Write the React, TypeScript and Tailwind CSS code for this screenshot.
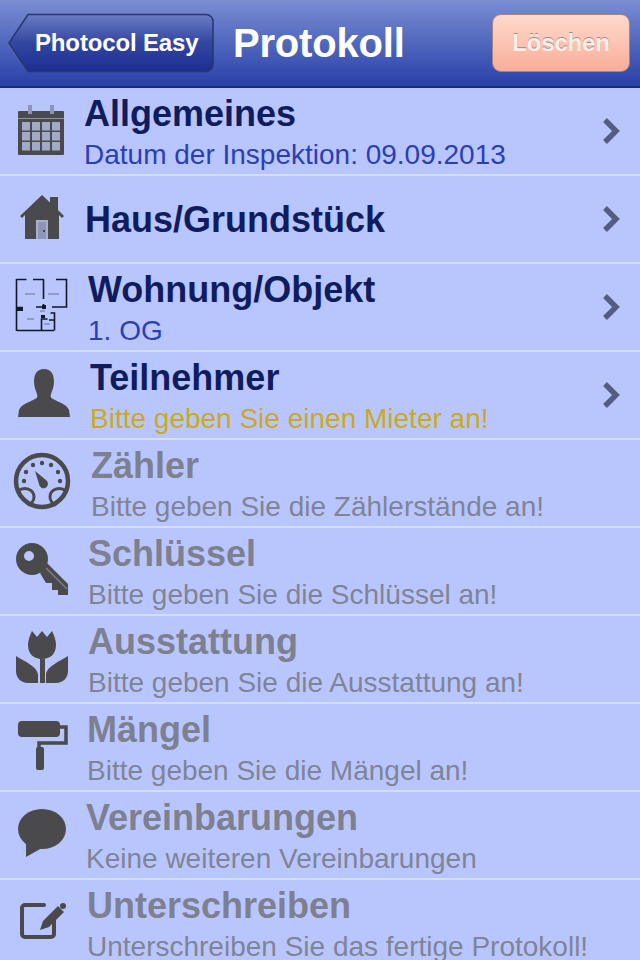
const ink = '#4a4a4c';

const CalendarIcon = () => (
  <svg viewBox="0 0 84 88" className="w-[84px] h-[88px] shrink-0" fill={ink}>
    <rect x="18" y="24" width="46" height="44" rx="1" />
    <rect x="28" y="18" width="4" height="9" fill="#8c95b5" />
    <rect x="50" y="18" width="4" height="9" fill="#8c95b5" />
    <rect x="18" y="31" width="46" height="1" fill="#8c92a8" />
    {[35, 45, 55].map((y) =>
      [22, 32, 42, 52].map((x) => <rect key={`${x}-${y}`} x={x} y={y} width="8" height="8.5" fill="#a2aac8" />),
    )}
  </svg>
);

const HouseIcon = () => (
  <svg viewBox="0 0 85 88" className="w-[85px] h-[88px] shrink-0" fill={ink}>
    <path d="M42 20l8 7.500V22h8v13l6 6-2 2-3-3v24H25V40l-3 3-2-2z" />
    <rect x="36" y="45" width="12" height="19" fill="#a7afcc" />
    <rect x="38" y="47" width="8" height="17" fill="#8d96b8" />
    <rect x="43" y="55" width="2" height="2" fill="#4a4a4c" />
  </svg>
);

const PlanIcon = () => (
  <svg viewBox="0 0 88 88" className="w-[88px] h-[88px] shrink-0" fill="none" stroke="#111827" strokeWidth="1.600">
    <path d="M16.500 16v52M16.500 16.500h10M33 16.500h10.500M56 16.500h10.500v27.500H52M43.500 16v20M43.500 41v3H36M17 44.500h6M17 67.500h37M54.500 67.500V50h-4M41.500 67.500V56h6M54 57h-5" />
    <rect x="17" y="45" width="6" height="3" fill="#111827" stroke="none" />
    <rect x="42" y="42" width="4" height="4" fill="#111827" stroke="none" />
    <rect x="41" y="52" width="4" height="3" fill="#111827" stroke="none" />
    <path d="M25 31h10M48 31h11M27 56h7M44 61h6M40 48h5" stroke="#6b7390" strokeWidth="1" />
  </svg>
);

const PersonIcon = () => (
  <svg viewBox="0 0 90 88" className="w-[90px] h-[88px] shrink-0" fill={ink}>
    <path d="M44 18c7 0 10 5 10 13 0 5-2 9-3 12-1 3 0 4 2 5 5 3 14 5 16 11l1 7H18l1-7c2-6 11-8 16-11 2-1 3-2 2-5-1-3-3-7-3-12 0-8 3-13 10-13z" />
  </svg>
);

const GaugeIcon = () => (
  <svg viewBox="0 0 91 88" className="w-[91px] h-[88px] shrink-0">
    <circle cx="42" cy="42" r="26" fill="none" stroke={ink} strokeWidth="4.500" />
    <path d="M18 52c6-5 16-2 16 6 0 4-3 7-6 8M66 52c-6-5-16-2-16 6 0 4 3 7 6 8" fill="none" stroke={ink} strokeWidth="3" />
    <g fill={ink}>
      <circle cx="42" cy="24" r="2.200" />
      <circle cx="33" cy="26" r="2.200" />
      <circle cx="51" cy="26" r="2.200" />
      <circle cx="26" cy="33" r="2.200" />
      <circle cx="58" cy="33" r="2.200" />
      <circle cx="24" cy="42" r="2.200" />
      <circle cx="60" cy="42" r="2.200" />
      <path d="M35 32l11 9a4.500 4.500 0 1 1-7 4z" />
    </g>
  </svg>
);

const KeyIcon = () => (
  <svg viewBox="0 0 88 88" className="w-[88px] h-[88px] shrink-0" fill={ink}>
    <path fillRule="evenodd" d="M32 16a16 16 0 1 1 0 32 16 16 0 0 1 0-32zm-3 8a5 5 0 1 0 0 10 5 5 0 0 0 0-10z" />
    <path d="M46 35l22 22v11H58v-5h-6v-7h-6l-6-10z" />
    <path d="M46 41l21 21" stroke="#7d7f86" strokeWidth="1.500" />
  </svg>
);

const TulipIcon = () => (
  <svg viewBox="0 0 88 88" className="w-[88px] h-[88px] shrink-0" fill={ink}>
    <path d="M28 30c0-5 2-10 4-14l5 6 5-6 5 6 5-6c2 4 4 9 4 14 0 9-6 14-14 14s-14-5-14-14z" />
    <rect x="40" y="44" width="5" height="24" />
    <path d="M16 41c8 5 22 11 22 19v8H28c-7 0-12-5-12-12z" />
    <path d="M68 41c-8 5-22 11-22 19v8h10c7 0 12-5 12-12z" />
  </svg>
);

const RollerIcon = () => (
  <svg viewBox="0 0 87 88" className="w-[87px] h-[88px] shrink-0" fill={ink}>
    <rect x="18" y="18" width="42" height="16" rx="4" />
    <path d="M60 24h6v16H39v5" fill="none" stroke={ink} strokeWidth="3.500" />
    <rect x="36" y="44" width="8" height="23" rx="2" />
  </svg>
);

const BubbleIcon = () => (
  <svg viewBox="0 0 86 88" className="w-[86px] h-[88px] shrink-0" fill={ink}>
    <ellipse cx="42" cy="38" rx="24" ry="20" />
    <path d="M26 50v16l16-9z" />
  </svg>
);

const SignIcon = () => (
  <svg viewBox="0 0 87 88" className="w-[87px] h-[88px] shrink-0" fill="none">
    <path d="M44 26H25a3 3 0 0 0-3 3v26a3 3 0 0 0 3 3h26a3 3 0 0 0 3-3V39" stroke={ink} strokeWidth="4" strokeLinecap="round" />
    <path d="M40 51l3-9 15-15 6 6-15 15z" fill={ink} />
    <circle cx="63" cy="27" r="3" fill={ink} />
  </svg>
);

const Chevron = () => (
  <svg viewBox="0 0 18 28" className="w-[18px] h-[28px] ml-auto mr-[20px] shrink-0" fill="none">
    <path d="M3 3l11 11L3 25" stroke="#525d80" strokeWidth="5.500" />
  </svg>
);

const rows = [
  { title: 'Allgemeines', sub: 'Datum der Inspektion: 09.09.2013', icon: <CalendarIcon />, state: 'done' },
  { title: 'Haus/Grundstück', icon: <HouseIcon />, state: 'done' },
  { title: 'Wohnung/Objekt', sub: '1. OG', icon: <PlanIcon />, state: 'done' },
  { title: 'Teilnehmer', sub: 'Bitte geben Sie einen Mieter an!', icon: <PersonIcon />, state: 'warn' },
  { title: 'Zähler', sub: 'Bitte geben Sie die Zählerstände an!', icon: <GaugeIcon />, state: 'off' },
  { title: 'Schlüssel', sub: 'Bitte geben Sie die Schlüssel an!', icon: <KeyIcon />, state: 'off' },
  { title: 'Ausstattung', sub: 'Bitte geben Sie die Ausstattung an!', icon: <TulipIcon />, state: 'off' },
  { title: 'Mängel', sub: 'Bitte geben Sie die Mängel an!', icon: <RollerIcon />, state: 'off' },
  { title: 'Vereinbarungen', sub: 'Keine weiteren Vereinbarungen', icon: <BubbleIcon />, state: 'off' },
  { title: 'Unterschreiben', sub: 'Unterschreiben Sie das fertige Protokoll!', icon: <SignIcon />, state: 'off' },
];

const App = () => {
  return (
    <div className="w-[640px] h-[960px] overflow-hidden bg-[#b9c6fd] font-['Liberation_Sans',Arial,sans-serif]">
      <header className="h-[88px] flex items-center border-b-2 border-[#1b2a80] bg-gradient-to-b from-[#7c8dd2] to-[#2a3fa8] pl-[8px] pr-[10px]">
        <div className="relative w-[206px] h-[60px] shrink-0 flex items-center pl-[27px]">
          <svg viewBox="0 0 206 60" className="absolute inset-0 w-[206px] h-[60px]">
            <defs>
              <linearGradient id="back" x1="0" y1="0" x2="0" y2="1">
                <stop offset="0" stopColor="#6a7cc4" />
                <stop offset="0.5" stopColor="#33469f" />
                <stop offset="1" stopColor="#1c2d92" />
              </linearGradient>
            </defs>
            <path d="M1 30L20 1.500h178a7 7 0 0 1 7 7v43a7 7 0 0 1-7 7H20z" fill="url(#back)" stroke="#27366f" strokeWidth="1.500" />
          </svg>
          <span className="relative text-white text-[24px] font-bold whitespace-nowrap tracking-[-0.15px]">Photocol Easy</span>
        </div>
        <h1 className="ml-[19px] text-white text-[40px] font-bold leading-none tracking-[-0.2px]">Protokoll</h1>
        <button className="ml-auto w-[138px] h-[58px] rounded-[9px] border border-[#a8847c] bg-gradient-to-b from-[#ffd9cd] to-[#f8ad98] text-[#fbeee8] text-[24px] font-bold tracking-[-0.2px] [text-shadow:0_-1px_0_#9c8a86]">
          Löschen
        </button>
      </header>
      {rows.map((row) => (
        <div key={row.title} className="h-[88px] flex items-center border-b-2 border-[#d6def2] overflow-hidden">
          {row.icon}
          <div className="flex flex-col">
            <span
              className={`text-[36px] font-bold leading-[40px] pt-[2px] whitespace-nowrap ${row.state === 'off' ? 'text-[#7d8090]' : 'text-[#0f1d5e]'}`}
            >
              {row.title}
            </span>
            {row.sub && (
              <span
                className={`text-[28px] leading-[32px] mt-[5px] mb-[-1px] whitespace-nowrap ${
                  row.state === 'off' ? 'text-[#7f8496]' : row.state === 'warn' ? 'text-[#c9a91f]' : 'text-[#2b3fb3]'
                }`}
              >
                {row.sub}
              </span>
            )}
          </div>
          {row.state !== 'off' && <Chevron />}
        </div>
      ))}
    </div>
  );
};

export default App;
